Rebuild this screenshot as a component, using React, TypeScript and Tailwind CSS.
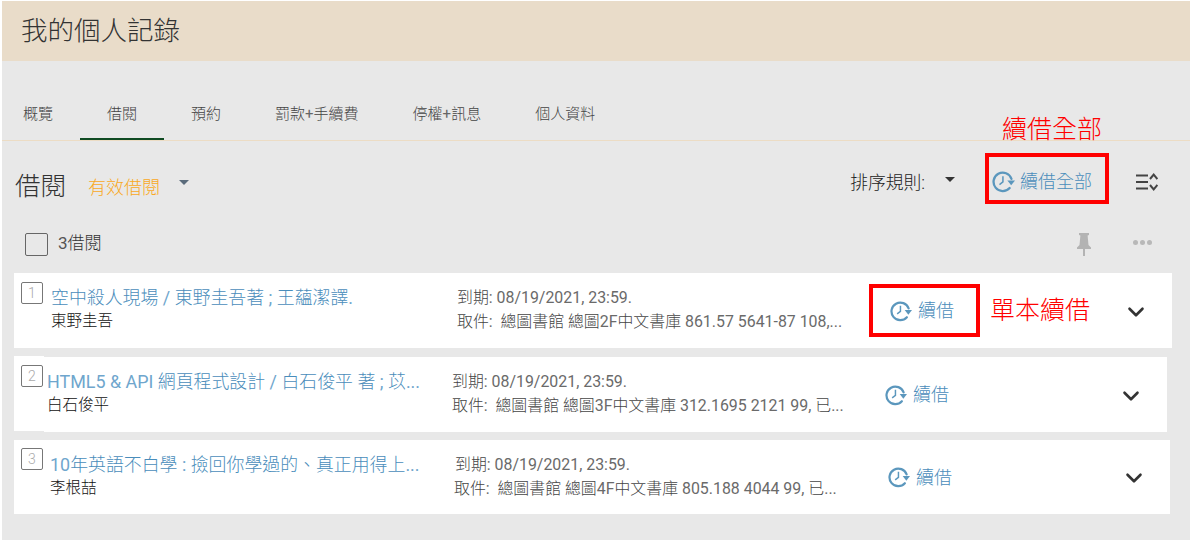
import { ChevronDown } from 'lucide-react';

const tabs = ['概覽', '借閱', '預約', '罰款+手續費', '停權+訊息', '個人資料'];

const loans = [
  {
    no: 1,
    title: '空中殺人現場 / 東野圭吾著 ; 王蘊潔譯.',
    author: '東野圭吾',
    pickup: '總圖書館 總圖2F中文書庫 861.57 5641-87 108,...',
    card: 'w-[1158px] h-[75px]',
    numberBox: 'mt-[9px]',
    titleCol: 'ml-[8px] w-[406px]',
    pickupCol: '',
    mt: 'mt-0',
  },
  {
    no: 2,
    title: 'HTML5 & API 網頁程式設計 / 白石俊平 著 ; 苡...',
    author: '白石俊平',
    pickup: '總圖書館 總圖3F中文書庫 312.1695 2121 99, 已...',
    card: 'w-[1153px] h-[75px]',
    numberBox: 'mt-[8px]',
    titleCol: 'ml-[4px] w-[405px]',
    pickupCol: '',
    mt: 'mt-[9px]',
  },
  {
    no: 3,
    title: '10年英語不白學 : 撿回你學過的、真正用得上...',
    author: '李根喆',
    pickup: '總圖書館 總圖4F中文書庫 805.188 4044 99, 已...',
    card: 'w-[1156px] h-[74px]',
    numberBox: 'mt-[8px]',
    titleCol: 'ml-[7px] w-[405px]',
    pickupCol: '-ml-px',
    mt: 'mt-[8px]',
  },
];

// CJK runs stay light, latin runs and digits get the regular weight in a softer colour
function Mixed({ text, latin }: { text: string; latin: string }) {
  const runs = text.match(/[\u0020-\u007e]+|[^\u0020-\u007e]+/g) ?? [];
  return (
    <>
      {runs.map((run, i) =>
        /^[\u0020-\u007e]/.test(run) ? (
          <span key={i} className={`font-normal ${latin}`}>
            {run}
          </span>
        ) : (
          <span key={i}>{run}</span>
        ),
      )}
    </>
  );
}

function RenewIcon({ className }: { className?: string }) {
  return (
    <svg viewBox="0 0 24 24" fill="none" className={className}>
      <path d="M20.300 9.200A9.600 9.600 0 1 0 18.400 18.800" stroke="#5b97bd" strokeWidth="2.400" strokeLinecap="round" />
      <path d="M11.400 6.400v6l-3.600 2.800" stroke="#5b97bd" strokeWidth="1.600" />
      <path d="M16 11h8l-4 5z" fill="#5b97bd" />
    </svg>
  );
}

function SortIcon() {
  return (
    <svg viewBox="0 0 22 20" fill="none" className="h-5 w-[22px]">
      <path d="M0 3.500h12M0 10h12M0 16.500h12" stroke="#444" strokeWidth="2.200" />
      <path d="M14 7l3.700-4.500L21.400 7M14 13l3.700 4.500 3.700-4.500" stroke="#444" strokeWidth="2" />
    </svg>
  );
}

function PinIcon() {
  return (
    <svg viewBox="0 0 16 24" className="h-6 w-4" fill="#b3b3b3">
      <path d="M3 1h10v2l-1.400.6.900 9.400 2.500 2.400V17H9v7H7v-7H1v-1.600L3.500 13l.9-9.400L3 3z" />
    </svg>
  );
}

export default function App() {
  return (
    <div
      className="relative h-[540px] w-[1190px] overflow-hidden bg-white pl-[2px] pt-px text-[#333]"
      style={{ fontFamily: 'Roboto, "Noto Sans CJK TC", sans-serif' }}
    >
      <div className="h-full bg-[#e8e8e8]">
        {/* Banner */}
        <div className="flex h-[60px] items-center bg-[#e9dcc9] pl-[19px] text-[26.500px] font-light text-[#333]">
          我的個人記錄
        </div>

        {/* Tabs */}
        <div className="flex h-[80px] items-end border-b border-[#ecdcc4] text-[15px] font-light text-[#444]">
          {tabs.map((tab, i) => (
            <div
              key={tab}
              className={`flex h-[46px] items-start pt-[9px] ${i === 0 ? 'pl-[21px] pr-[27px]' : 'px-[27px]'} ${
                i === 1 ? 'border-b-2 border-[#0f4a22]' : ''
              }`}
            >
              <Mixed text={tab} latin="text-[#666]" />
            </div>
          ))}
        </div>

        {/* Section heading */}
        <div className="flex h-[74px] items-center pl-[13px] pt-[14px]">
          <span className="mt-[2px] text-[25.500px] font-light text-[#333]">借閱</span>
          <span className="ml-[22px] mt-[4px] text-[18px] font-light text-[#f9a825]">有效借閱</span>
          <span className="mb-[6px] ml-[19px] h-0 w-0 border-x-[5px] border-t-[5px] border-x-transparent border-t-[#5a6b7b]" />
          <span className="mb-[4px] ml-auto text-[17.800px] font-light text-[#222]">排序規則:</span>
          <span className="mb-[12px] ml-[20px] h-0 w-0 border-x-[5px] border-t-[5px] border-x-transparent border-t-[#333]" />
          <div className="mb-[8px] ml-[37px] flex items-center">
            <RenewIcon className="h-[23px] w-[23px]" />
            <span className="ml-[5px] text-[18px] font-light text-[#4a8dbb]">續借全部</span>
          </div>
          <div className="mb-[6px] ml-[44px] mr-[32px]">
            <SortIcon />
          </div>
        </div>

        {/* List toolbar */}
        <div className="flex h-[58px] items-center pl-[23px] pr-[38px]">
          <span className="h-[23px] w-[23px] rounded-[2px] border border-[#666]" />
          <span className="ml-[10px] text-[17px] font-light">
            <Mixed text="3借閱" latin="text-[#555]" />
          </span>
          <div className="ml-auto flex items-center gap-[41px]">
            <PinIcon />
            <div className="mb-[4px] flex gap-[2px]">
              <span className="h-[5px] w-[5px] rounded-full bg-[#b8b8b8]" />
              <span className="h-[5px] w-[5px] rounded-full bg-[#b8b8b8]" />
              <span className="h-[5px] w-[5px] rounded-full bg-[#b8b8b8]" />
            </div>
          </div>
        </div>

        {/* Loans */}
        <div className="ml-[12px] flex flex-col">
          {loans.map((loan) => (
            <div key={loan.no} className={`relative flex bg-white pl-[7px] ${loan.card} ${loan.mt}`}>
              {/* the second card's left end sits a pixel higher in the screenshot */}
              {loan.no === 2 && <div className="absolute -top-px left-0 h-px w-[30px] bg-white" />}
              {loan.no === 2 && <div className="absolute bottom-0 left-0 h-px w-[30px] bg-[#e8e8e8]" />}
              <div className={`flex h-[22px] w-[22px] shrink-0 items-center justify-center rounded-[2px] border border-[#777] text-[14px] font-light leading-none text-[#aaa] ${loan.numberBox}`}>
                {loan.no}
              </div>
              <div className={`shrink-0 pt-[13px] ${loan.titleCol}`}>
                <div className="whitespace-nowrap text-[17.900px] font-light leading-[24px] text-[#4a8dbb]">
                  <Mixed text={loan.title} latin="text-[#6fa6cd]" />
                </div>
                <div className="whitespace-nowrap text-[15.500px] font-light leading-[22px] text-[#111]">{loan.author}</div>
              </div>
              <div className="w-[433px] shrink-0 whitespace-nowrap pt-[13px] text-[15.900px] font-light leading-[24px] text-[#444]">
                <div>
                  <Mixed text="到期: 08/19/2021, 23:59." latin="text-[#6a6a6a]" />
                </div>
                <div className={loan.pickupCol}>
                  <Mixed text={`取件:\u00a0 ${loan.pickup}`} latin="text-[#6a6a6a]" />
                </div>
              </div>
              <div className="flex h-full w-[233px] shrink-0 items-center">
                <RenewIcon className="h-[22px] w-[22px]" />
                <span className="ml-[6px] text-[18px] font-light text-[#4a8dbb]">續借</span>
              </div>
              <div className="flex h-full items-center pt-[2px]">
                <ChevronDown size={26} className="text-[#333]" strokeWidth={2.400} />
              </div>
            </div>
          ))}
        </div>
      </div>

      {/* Annotations added on top of the page */}
      <div className="absolute left-[1002px] top-[115px] text-[25px] font-light leading-[30px] text-[#ff0000]">續借全部</div>
      <div className="absolute left-[985px] top-[153px] h-[51px] w-[124px] border-[4px] border-[#ff0000]" />
      <div className="absolute left-[869px] top-[284px] h-[53px] w-[111px] border-[4px] border-[#ff0000]" />
      <div className="absolute left-[990px] top-[296px] text-[25px] font-light leading-[30px] text-[#ff0000]">單本續借</div>
    </div>
  );
}
